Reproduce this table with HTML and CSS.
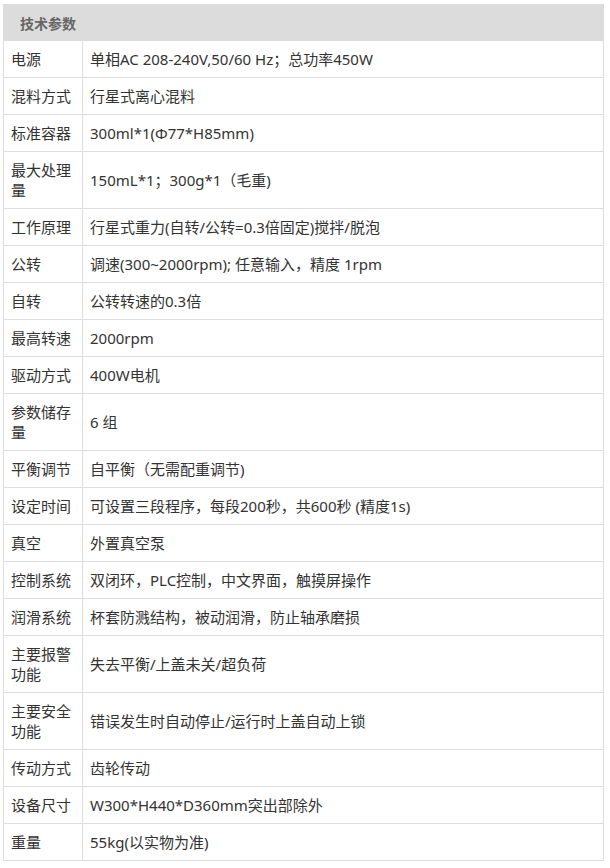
FILE: index.html
```html
<!DOCTYPE html>
<html lang="zh-CN">
<head>
<meta charset="utf-8">
<title>技术参数</title>
<link rel="stylesheet" href="styles.css">
</head>
<body>
<table class="spec">
  <colgroup>
    <col class="col-k">
    <col class="col-v">
  </colgroup>
  <thead>
    <tr><th colspan="2" class="spec-head">技术参数</th></tr>
  </thead>
  <tbody>
    <tr><td class="k">电源</td><td class="v">单相AC 208-240V,50/60 Hz；总功率450W</td></tr>
    <tr><td class="k">混料方式</td><td class="v">行星式离心混料</td></tr>
    <tr><td class="k">标准容器</td><td class="v">300ml*1(Φ77*H85mm)</td></tr>
    <tr><td class="k">最大处理量</td><td class="v">150mL*1；300g*1（毛重)</td></tr>
    <tr><td class="k">工作原理</td><td class="v">行星式重力(自转/公转=0.3倍固定)搅拌/脱泡</td></tr>
    <tr><td class="k">公转</td><td class="v">调速(300~2000rpm); 任意输入，精度 1rpm</td></tr>
    <tr><td class="k">自转</td><td class="v">公转转速的0.3倍</td></tr>
    <tr><td class="k">最高转速</td><td class="v">2000rpm</td></tr>
    <tr><td class="k">驱动方式</td><td class="v">400W电机</td></tr>
    <tr><td class="k">参数储存量</td><td class="v">6 组</td></tr>
    <tr><td class="k">平衡调节</td><td class="v">自平衡（无需配重调节)</td></tr>
    <tr><td class="k">设定时间</td><td class="v">可设置三段程序，每段200秒，共600秒 (精度1s)</td></tr>
    <tr><td class="k">真空</td><td class="v">外置真空泵</td></tr>
    <tr><td class="k">控制系统</td><td class="v">双闭环，PLC控制，中文界面，触摸屏操作</td></tr>
    <tr><td class="k">润滑系统</td><td class="v">杯套防溅结构，被动润滑，防止轴承磨损</td></tr>
    <tr><td class="k">主要报警功能</td><td class="v">失去平衡/上盖未关/超负荷</td></tr>
    <tr><td class="k">主要安全功能</td><td class="v">错误发生时自动停止/运行时上盖自动上锁</td></tr>
    <tr><td class="k">传动方式</td><td class="v">齿轮传动</td></tr>
    <tr><td class="k">设备尺寸</td><td class="v">W300*H440*D360mm突出部除外</td></tr>
    <tr><td class="k">重量</td><td class="v">55kg(以实物为准)</td></tr>
  </tbody>
</table>
</body>
</html>
```

FILE: styles.css
```css
html, body {
  margin: 0;
  padding: 0;
  background: #ffffff;
}

body {
  padding: 4px 0 0 3px;
  font-family: "Noto Sans", "Noto Sans CJK SC", sans-serif;
  color: #333333;
}

.spec {
  width: 601px;
  border-collapse: collapse;
  table-layout: fixed;
  font-size: 15px;
}

.col-k {
  width: 79px;
}

.spec-head {
  height: 35px;
  padding: 0 0 0 16px;
  background: #dcdcdc;
  color: #666666;
  font-weight: bold;
  font-size: 14px;
  text-align: left;
  border: 1px solid #dcdcdc;
}

.spec td {
  border: 1px solid #dddddd;
  padding: 8px 7px;
  line-height: 20px;
  vertical-align: middle;
  text-align: left;
}

.spec td.v {
  padding-left: 7px;
}
```
